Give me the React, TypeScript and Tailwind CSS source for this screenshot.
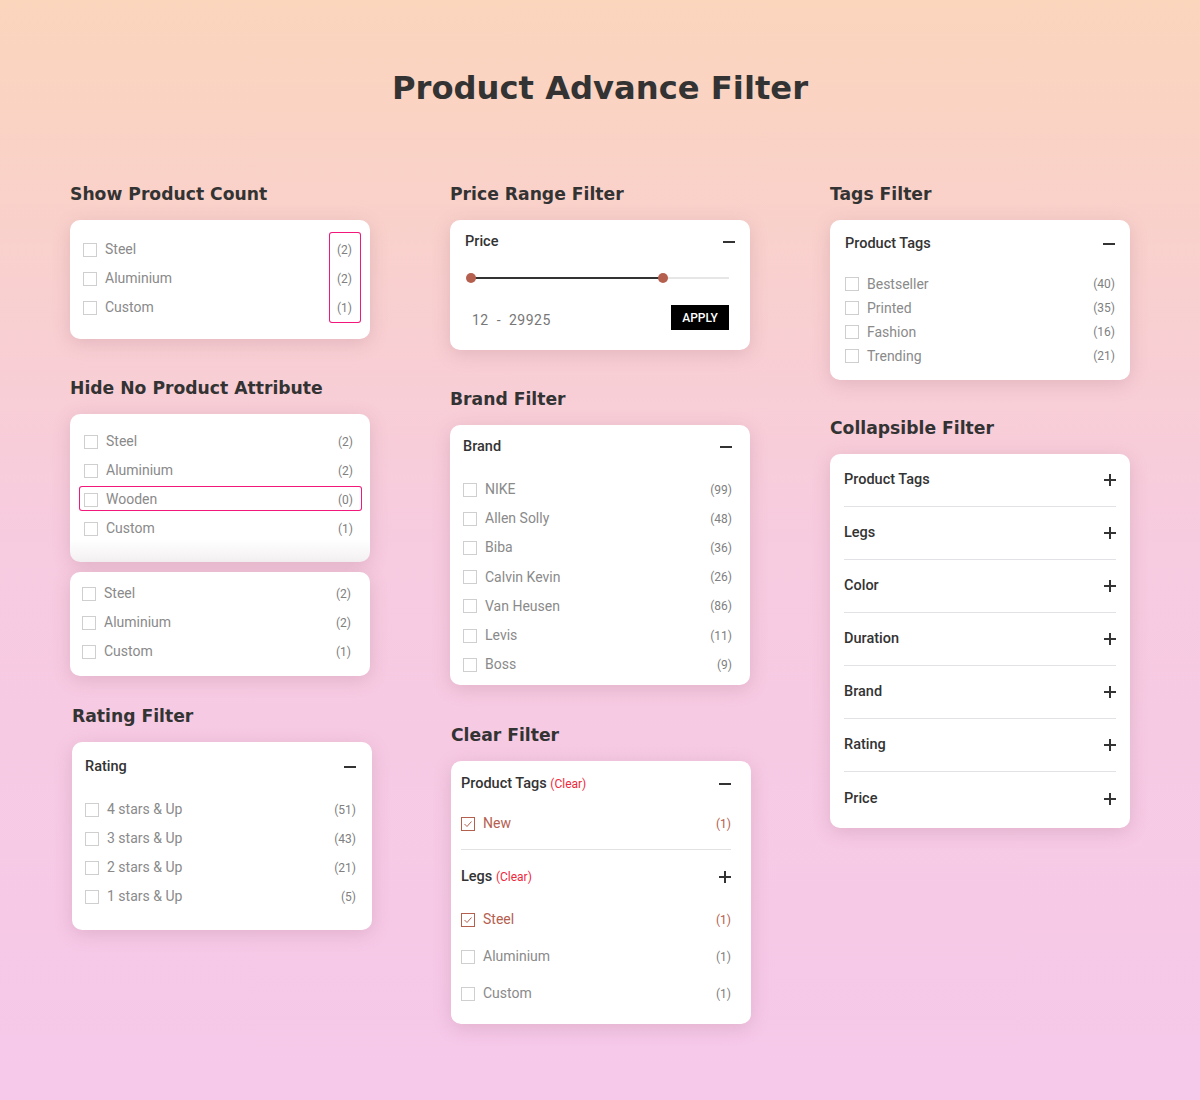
import React from "react";

type Item = { label: string; count: number; checked?: boolean };

const HEAD_FONT = { fontFamily: "'DejaVu Sans', Lato, sans-serif" };
const BODY_FONT = { fontFamily: "Roboto, 'Liberation Sans', sans-serif" };

const Minus = () => <span className="block h-[2px] w-[12px] bg-[#333]" />;

const Plus = () => (
  <svg width="12" height="12" viewBox="0 0 12 12" className="block">
    <path d="M6 0v12M0 6h12" stroke="#333" strokeWidth="2" />
  </svg>
);

const Box = ({ checked }: { checked?: boolean }) =>
  checked ? (
    <span className="flex h-[14px] w-[14px] shrink-0 items-center justify-center border border-[#b5604f]">
      <svg width="10" height="8" viewBox="0 0 10 8">
        <path d="M1.5 4l2.5 2.5L8.5 1.5" stroke="#b5604f" strokeWidth="1" fill="none" />
      </svg>
    </span>
  ) : (
    <span className="block h-[14px] w-[14px] shrink-0 border border-[#cfcfcf]" />
  );

const Row = ({ item, h = "h-[29px]" }: { item: Item; h?: string }) => (
  <div className={`flex items-center justify-between ${h}`}>
    <div className="flex items-center gap-[8px]">
      <Box checked={item.checked} />
      <span className={`text-[14px] ${item.checked ? "text-[#b5604f]" : "text-[#8a8a8a]"}`}>
        {item.label}
      </span>
    </div>
    <span className={`text-[12px] ${item.checked ? "text-[#b5604f]" : "text-[#808080]"}`}>
      ({item.count})
    </span>
  </div>
);

// pink highlight frame drawn over rows
const Frame = ({ className }: { className: string }) => (
  <div className={`pointer-events-none absolute rounded-[2px] shadow-[0_0_0_1px_#f2177a] ${className}`} />
);

const Heading = ({ children, className = "" }: { children: React.ReactNode; className?: string }) => (
  <h2
    className={`relative top-[1px] text-[17.2px] font-bold leading-[24px] text-[#333] ${className}`}
    style={HEAD_FONT}
  >
    {children}
  </h2>
);

const Card = ({ children, className = "" }: { children: React.ReactNode; className?: string }) => (
  <div className={`w-[300px] rounded-[10px] bg-white shadow-[0_4px_18px_rgba(150,90,110,0.22)] ${className}`}>
    {children}
  </div>
);

const CardHead = ({ title, icon }: { title: React.ReactNode; icon: React.ReactNode }) => (
  <div className="flex h-[24px] items-center justify-between">
    <span className="text-[14.5px] font-medium text-[#333]">{title}</span>
    {icon}
  </div>
);

const basic: Item[] = [
  { label: "Steel", count: 2 },
  { label: "Aluminium", count: 2 },
  { label: "Custom", count: 1 },
];

const brands: Item[] = [
  { label: "NIKE", count: 99 },
  { label: "Allen Solly", count: 48 },
  { label: "Biba", count: 36 },
  { label: "Calvin Kevin", count: 26 },
  { label: "Van Heusen", count: 86 },
  { label: "Levis", count: 11 },
  { label: "Boss", count: 9 },
];

const tags: Item[] = [
  { label: "Bestseller", count: 40 },
  { label: "Printed", count: 35 },
  { label: "Fashion", count: 16 },
  { label: "Trending", count: 21 },
];

const ratings: Item[] = [
  { label: "4 stars & Up", count: 51 },
  { label: "3 stars & Up", count: 43 },
  { label: "2 stars & Up", count: 21 },
  { label: "1 stars & Up", count: 5 },
];

const collapsible = ["Product Tags", "Legs", "Color", "Duration", "Brand", "Rating", "Price"];

const App = () => {
  return (
    <div
      className="min-h-[1100px] w-full bg-gradient-to-b from-[#fbd5bc] via-[#f7cbe0] to-[#f6c8ea]"
      style={BODY_FONT}
    >
      <h1
        className="pt-[66px] text-center text-[32.2px] font-bold leading-[44px] text-[#333]"
        style={HEAD_FONT}
      >
        Product Advance Filter
      </h1>

      <div className="mt-[71px] flex gap-[80px] pl-[70px]">
        {/* column 1 */}
        <div className="flex w-[302px] flex-col">
          <Heading>Show Product Count</Heading>
          <Card className="mt-[15px] pb-[17px] pl-[13px] pr-[18px] pt-[15px]">
            <div className="relative">
              {basic.map((it) => (
                <Row key={it.label} item={it} />
              ))}
              <Frame className="right-[-8px] top-[-2px] h-[89px] w-[30px]" />
            </div>
          </Card>

          <Heading className="mt-[36px]">Hide No Product Attribute</Heading>
          <Card className="mt-[15px] bg-gradient-to-b from-white from-85% to-[#f3f0f1] pb-[19px] pl-[14px] pr-[17px] pt-[13px]">
            <div className="relative">
              {[basic[0], basic[1], { label: "Wooden", count: 0 }, basic[2]].map((it) => (
                <Row key={it.label} item={it} />
              ))}
              <Frame className="left-[-4px] right-[-8px] top-[60px] h-[23px]" />
            </div>
          </Card>
          <Card className="mt-[10px] pb-[10px] pl-[12px] pr-[19px] pt-[7px]">
            {basic.map((it) => (
              <Row key={it.label} item={it} />
            ))}
          </Card>

          <Heading className="ml-[2px] mt-[27px]">Rating Filter</Heading>
          <Card className="ml-[2px] mt-[15px] pb-[19px] pl-[13px] pr-[16px] pt-[13px]">
            <CardHead title="Rating" icon={<Minus />} />
            <div className="mt-[16px]">
              {ratings.map((it) => (
                <Row key={it.label} item={it} />
              ))}
            </div>
          </Card>
        </div>

        {/* column 2 */}
        <div className="-ml-[2px] flex w-[301px] flex-col">
          <Heading>Price Range Filter</Heading>
          <Card className="mt-[15px] px-[15px] pb-[20px] pt-[10px]">
            <CardHead title="Price" icon={<Minus />} />
            <div className="relative mx-[6px] mt-[19px] h-[10px]">
              <div className="absolute left-0 right-0 top-[4px] h-[2px] bg-[#e6e6e6]" />
              <div className="absolute left-0 top-[4px] h-[2px] w-[192px] bg-[#333]" />
              <div className="absolute left-[-5px] top-0 h-[10px] w-[10px] rounded-full bg-[#b5604f]" />
              <div className="absolute left-[187px] top-0 h-[10px] w-[10px] rounded-full bg-[#b5604f]" />
            </div>
            <div className="mx-[6px] mt-[22px] flex items-center justify-between">
              <span className="relative top-[3px] pl-[1px] text-[14px] tracking-[0.5px] text-[#777]">
                12&nbsp; - &nbsp;29925
              </span>
              <span className="flex h-[25px] w-[58px] items-center justify-center bg-black text-[12px] font-medium text-white">
                APPLY
              </span>
            </div>
          </Card>

          <Heading className="mt-[36px]">Brand Filter</Heading>
          <Card className="mt-[15px] pb-[6px] pl-[13px] pr-[18px] pt-[10px]">
            <CardHead title="Brand" icon={<Minus />} />
            <div className="mt-[16px]">
              {brands.map((it) => (
                <Row key={it.label} item={it} h="h-[29.2px]" />
              ))}
            </div>
          </Card>

          <Heading className="ml-[1px] mt-[37px]">Clear Filter</Heading>
          <Card className="ml-[1px] mt-[15px] pb-[12px] pl-[10px] pr-[20px] pt-[11px]">
            <CardHead
              title={
                <>
                  Product Tags <span className="text-[12px] font-normal text-[#f0283c]">(Clear)</span>
                </>
              }
              icon={<Minus />}
            />
            <div className="mt-[16px]">
              <Row item={{ label: "New", count: 1, checked: true }} h="h-[23px]" />
            </div>
            <div className="mt-[14px] border-t border-[#e2e2e2]" />
            <div className="mt-[15px]">
              <CardHead
                title={
                  <>
                    Legs <span className="text-[12px] font-normal text-[#f0283c]">(Clear)</span>
                  </>
                }
                icon={<Plus />}
              />
            </div>
            <div className="mt-[12px]">
              {[
                { label: "Steel", count: 1, checked: true },
                { label: "Aluminium", count: 1 },
                { label: "Custom", count: 1 },
              ].map((it) => (
                <Row key={it.label} item={it} h="h-[37px]" />
              ))}
            </div>
          </Card>
        </div>

        {/* column 3 */}
        <div className="-ml-[1px] flex w-[300px] flex-col">
          <Heading>Tags Filter</Heading>
          <Card className="mt-[15px] pb-[12px] pl-[15px] pr-[15px] pt-[12px]">
            <CardHead title="Product Tags" icon={<Minus />} />
            <div className="mt-[16px]">
              {tags.map((it) => (
                <Row key={it.label} item={it} h="h-[24px]" />
              ))}
            </div>
          </Card>

          <Heading className="mt-[35px]">Collapsible Filter</Heading>
          <Card className="mt-[15px] px-[14px] pb-[3px]">
            {collapsible.map((t, i) => (
              <div
                key={t}
                className={`flex h-[53px] items-center justify-between ${
                  i < collapsible.length - 1 ? "border-b border-[#e3e1e6]" : ""
                }`}
              >
                <span className="text-[14.5px] font-medium text-[#333]">{t}</span>
                <Plus />
              </div>
            ))}
          </Card>
        </div>
      </div>
    </div>
  );
};

export default App;
